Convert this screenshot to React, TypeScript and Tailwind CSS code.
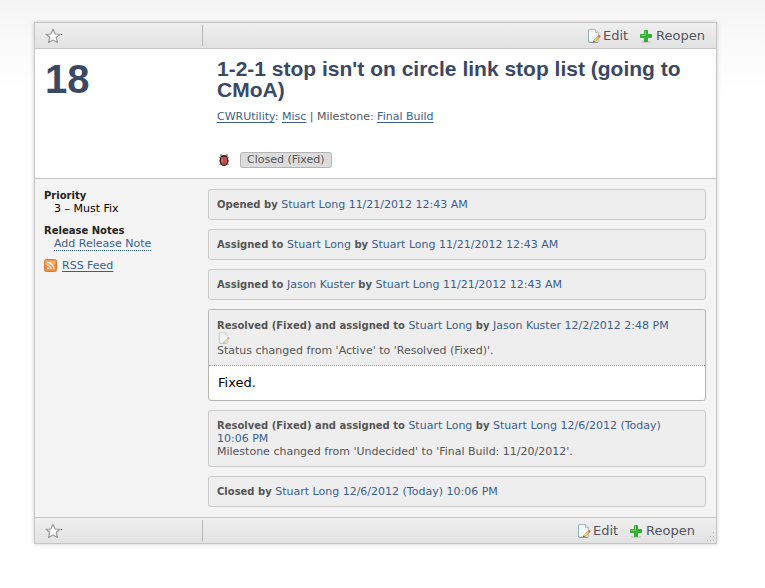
import type { ReactNode } from "react";

function Star() {
  return (
    <button type="button" aria-label="Star case" className="flex items-center">
      <svg width="18" height="16" viewBox="0 0 18 16" aria-hidden="true">
        <path
          d="M8 1.200 10 6l5 .3-3.800 3.200 1.200 5L8 12l-4.400 2.500 1.200-5L1 6.300 6 6z"
          fill="#fff"
          stroke="#999"
          strokeWidth="1.200"
          strokeLinejoin="round"
        />
        <rect x="16" y="6" width="1" height="1" fill="#444" />
      </svg>
    </button>
  );
}

function EditIcon({ size = 14 }: { size?: number }) {
  return (
    <svg width={size} height={size} viewBox="0 0 14 14" aria-hidden="true" className="shrink-0">
      <path d="M1.500.5h7l3 3v9.500h-10z" fill="#f5faf9" stroke="#b3bfbe" />
      <path d="M1.500 1v12" stroke="#8fb0b4" />
      <path d="M2 13.400h9" stroke="#8d9799" />
      <path d="M8.500.5v3h3" fill="#d8e2e2" stroke="#b3bfbe" />
      <path d="M7 12.500 11.500 8" stroke="#b99a3c" strokeWidth="2.400" />
      <path d="M7.300 12 11.500 7.900" stroke="#f5dc6a" strokeWidth="1.200" />
      <path d="m11.300 8.200 1.700-1.700" stroke="#dc6a5c" strokeWidth="2.400" />
      <path d="m6 13.500.6-1.700 1.100 1.100z" fill="#444" />
    </svg>
  );
}

function PlusIcon() {
  return (
    <svg width="14" height="14" viewBox="0 0 14 14" aria-hidden="true" className="shrink-0">
      <ellipse cx="7" cy="13" rx="5" ry="1" fill="#000" opacity=".12" />
      <path
        d="M5.500 1.500h3v4h4v3h-4v4h-3v-4h-4v-3h4z"
        fill="#2fb52f"
        stroke="#35a838"
        strokeLinejoin="round"
      />
      <path d="M6.500 2v4.500H2" stroke="#6fd464" fill="none" />
    </svg>
  );
}

function BugIcon() {
  return (
    <svg width="13" height="14" viewBox="0 0 13 14" aria-hidden="true">
      <path d="M4 1v3M10 1v3M2.500 4.500l2 1M11.500 4.500l-2 1M2 8h10M2.500 11.500l2-1M11.500 11.500l-2-1" stroke="#555" />
      <ellipse cx="7" cy="7.500" rx="3.700" ry="5" fill="#cf5552" stroke="#3a1a1a" strokeWidth="1.200" />
      <path d="M4.500 3.200h5" stroke="#2b2020" strokeWidth="1.300" />
      <path d="M7 4.500v7" stroke="#9a3438" strokeWidth=".8" />
      <path d="M5.300 6v3" stroke="#e58b86" />
    </svg>
  );
}

function RssIcon() {
  return (
    <svg width="13" height="13" viewBox="0 0 13 13" aria-hidden="true">
      <rect x=".5" y=".5" width="12" height="12" rx="2" fill="#f0883a" stroke="#d87a35" />
      <path d="M1.500 1.500h10v4q-5-1-10 1z" fill="#f8ad68" />
      <circle cx="4" cy="9.300" r="1.100" fill="#fff" />
      <path d="M3 6.200a4 4 0 0 1 4 4M3 3.400a7 7 0 0 1 7 7" fill="none" stroke="#fff" strokeWidth="1.300" />
    </svg>
  );
}

function Grip() {
  const dots = [[8, 0], [5, 4], [8, 4], [2, 8], [5, 8], [8, 8]];
  return (
    <svg width="10" height="10" viewBox="0 0 10 10" aria-hidden="true" className="absolute right-px bottom-px">
      {dots.map(([x, y]) => (
        <rect key={`${x}-${y}`} x={x} y={y} width="1" height="1" fill="#b5b5b5" />
      ))}
    </svg>
  );
}

function Toolbar({ footer = false }: { footer?: boolean }) {
  return (
    <div
      className={`relative flex h-[26px] items-center bg-linear-to-b from-[#efefef] to-[#e2e2e2] pl-[10px] ${
        footer ? "border-t border-[#c6c6c6] pr-[21px]" : "border-b border-[#c6c6c6] pr-[11px]"
      }`}
    >
      <div className="flex h-[21px] w-[158px] shrink-0 items-center border-r border-[#b5b5b5]">
        <Star />
      </div>
      <div className="flex flex-1 justify-end gap-[11px] text-[13px] leading-4 text-[#54545c]">
        <a href="#edit" className="flex items-center gap-[2px]">
          <EditIcon />
          Edit
        </a>
        <a href="#reopen" className="flex items-center gap-[3px]">
          <PlusIcon />
          Reopen
        </a>
      </div>
      {footer && <Grip />}
    </div>
  );
}

function Name({ children }: { children: ReactNode }) {
  return <span className="text-[#3a5f8a]">{children}</span>;
}

function Action({ children }: { children: ReactNode }) {
  return <b className="text-[10px]">{children}</b>;
}

function Entry({ children }: { children: ReactNode }) {
  return <article className="rounded-[3px] border border-[#cacaca] bg-[#eee] p-2">{children}</article>;
}

export default function App() {
  return (
    <div className="bg-linear-to-b from-[#f5f5f5] to-white to-[90px] px-[34px] pt-[22px] pb-11 font-['DejaVu_Sans',sans-serif] text-[11px] leading-[13px] text-[#555]">
      <main className="mr-[14px] border border-[#c6c6c6] bg-[#f4f4f4] shadow-[0_0_4px_rgba(0,0,0,0.2)]">
        <Toolbar />

        <header className="flex h-[130px] border-b border-[#c6c6c6] bg-white">
          <div className="w-[182px] shrink-0 pt-[9px] pl-[10px] font-['Liberation_Sans',sans-serif] text-[40px] leading-[42px] font-bold text-[#3b4863]">
            18
          </div>
          <div className="flex-1 pr-[10px]">
            <h1 className="pt-[9px] font-['Liberation_Sans',sans-serif] text-[21px] leading-[21px] font-bold text-[#3b4863]">
              1-2-1 stop isn't on circle link stop list (going to CMoA)
            </h1>
            <p className="mt-[10px]">
              <a href="#project" className="text-[#3a5f8a] underline underline-offset-2">CWRUtility</a>:{" "}
              <a href="#area" className="text-[#3a5f8a] underline underline-offset-2">Misc</a> | Milestone:{" "}
              <a href="#milestone" className="text-[#3a5f8a] underline underline-offset-2">Final Build</a>
            </p>
            <div className="mt-[29px] flex items-center gap-[10px]">
              <BugIcon />
              <span className="rounded-[3px] border border-[#b3b3b3] bg-[#dcdcdc] px-[6px] pb-px">
                Closed (Fixed)
              </span>
            </div>
          </div>
        </header>

        <div className="flex pt-[10px] pb-[10px]">
          <aside className="w-[173px] shrink-0 pl-[9px]">
            <dl className="text-black">
              <dt className="text-[10px] font-bold text-[#222]">Priority</dt>
              <dd className="pl-[10px]">3 – Must Fix</dd>
              <dt className="mt-[9px] text-[10px] font-bold text-[#222]">Release Notes</dt>
              <dd className="pl-[10px]">
                <a href="#note" className="border-b border-dotted border-[#3a5f8a] text-[#3a5f8a]">Add Release Note</a>
              </dd>
            </dl>
            <a href="#rss" className="mt-[9px] flex items-center gap-[5px] text-[#3a5f8a] underline underline-offset-2">
              <RssIcon />
              RSS Feed
            </a>
          </aside>

          <section className="flex flex-1 flex-col gap-[9px] pr-[10px]">
            <Entry>
              <Action>Opened by</Action> <Name>Stuart Long 11/21/2012 12:43 AM</Name>
            </Entry>
            <Entry>
              <Action>Assigned to</Action> <Name>Stuart Long</Name> <Action>by</Action>{" "}
              <Name>Stuart Long 11/21/2012 12:43 AM</Name>
            </Entry>
            <Entry>
              <Action>Assigned to</Action> <Name>Jason Kuster</Name> <Action>by</Action>{" "}
              <Name>Stuart Long 11/21/2012 12:43 AM</Name>
            </Entry>
            <article className="rounded-[3px] border border-[#b5b5b5] bg-white">
              <div className="rounded-t-[3px] border-b border-dotted border-[#999] bg-[#eee] px-2 pt-[9px] pb-[8px]">
                <Action>Resolved (Fixed) and assigned to</Action> <Name>Stuart Long</Name> <Action>by</Action>{" "}
                <Name>Jason Kuster 12/2/2012 2:48 PM</Name>
                <button type="button" aria-label="Edit entry" className="flex h-[12px] items-center pl-px opacity-50">
                  <EditIcon size={12} />
                </button>
                <p>Status changed from 'Active' to 'Resolved (Fixed)'.</p>
              </div>
              <p className="p-[9px] text-[13px] leading-4 text-black">Fixed.</p>
            </article>
            <Entry>
              <p>
                <Action>Resolved (Fixed) and assigned to</Action> <Name>Stuart Long</Name> <Action>by</Action>{" "}
                <Name>Stuart Long 12/6/2012 (Today)</Name> <span className="inline-block text-[#3a5f8a] whitespace-nowrap pr-4">10:06 PM</span>
              </p>
              <p>Milestone changed from 'Undecided' to 'Final Build: 11/20/2012'.</p>
            </Entry>
            <Entry>
              <Action>Closed by</Action> <Name>Stuart Long 12/6/2012 (Today) 10:06 PM</Name>
            </Entry>
          </section>
        </div>

        <Toolbar footer />
      </main>
    </div>
  );
}
